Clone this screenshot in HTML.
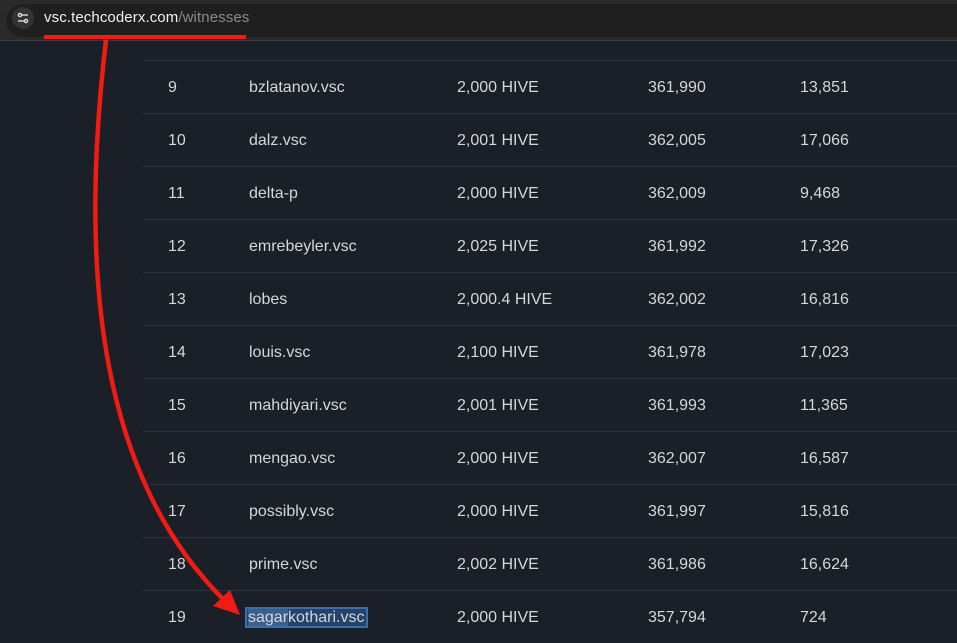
<!DOCTYPE html>
<html><head><meta charset="utf-8"><style>
*{margin:0;padding:0;box-sizing:border-box}
body{width:957px;height:638px;overflow:hidden;background:#1b1f27;font-family:"Liberation Sans",sans-serif;position:relative}
.bar{position:absolute;left:0;top:0;width:957px;height:41px;background:#2a2a2b;border-bottom:1px solid #3a3a3a}
.pill{position:absolute;left:6px;top:4px;width:951px;height:33px;background:#1f1f20;border-radius:17px 0 0 17px}
.ic{position:absolute;left:12px;top:7px;width:22px;height:22px;border-radius:50%;background:#333}
.url{position:absolute;left:44px;top:9px;font-size:15px;color:#f0f0f0;letter-spacing:0.1px}
.url span{color:#8a8a8a}
.row{position:absolute;left:143px;width:814px;height:53px;border-top:1px solid #2d333d;color:#d4d7dc;font-size:16px}
.row div{position:absolute;top:18px}
.c1{left:25px}.c2{left:106px}.c3{left:314px}.c4{left:505px}.c5{left:657px}
.sel{background:#25436a;outline:2px solid #3c6ea8;padding:0 1px;margin-left:-2px}
.sel b{font-weight:normal;background:#3a5f8c}
</style></head><body>
<div class="row" style="top:7px;border-top:none"></div>
<div class="row" style="top:60px"><div class="c1">9</div><div class="c2">bzlatanov.vsc</div><div class="c3">2,000 HIVE</div><div class="c4">361,990</div><div class="c5">13,851</div></div>
<div class="row" style="top:113px"><div class="c1">10</div><div class="c2">dalz.vsc</div><div class="c3">2,001 HIVE</div><div class="c4">362,005</div><div class="c5">17,066</div></div>
<div class="row" style="top:166px"><div class="c1">11</div><div class="c2">delta-p</div><div class="c3">2,000 HIVE</div><div class="c4">362,009</div><div class="c5">9,468</div></div>
<div class="row" style="top:219px"><div class="c1">12</div><div class="c2">emrebeyler.vsc</div><div class="c3">2,025 HIVE</div><div class="c4">361,992</div><div class="c5">17,326</div></div>
<div class="row" style="top:272px"><div class="c1">13</div><div class="c2">lobes</div><div class="c3">2,000.4 HIVE</div><div class="c4">362,002</div><div class="c5">16,816</div></div>
<div class="row" style="top:325px"><div class="c1">14</div><div class="c2">louis.vsc</div><div class="c3">2,100 HIVE</div><div class="c4">361,978</div><div class="c5">17,023</div></div>
<div class="row" style="top:378px"><div class="c1">15</div><div class="c2">mahdiyari.vsc</div><div class="c3">2,001 HIVE</div><div class="c4">361,993</div><div class="c5">11,365</div></div>
<div class="row" style="top:431px"><div class="c1">16</div><div class="c2">mengao.vsc</div><div class="c3">2,000 HIVE</div><div class="c4">362,007</div><div class="c5">16,587</div></div>
<div class="row" style="top:484px"><div class="c1">17</div><div class="c2">possibly.vsc</div><div class="c3">2,000 HIVE</div><div class="c4">361,997</div><div class="c5">15,816</div></div>
<div class="row" style="top:537px"><div class="c1">18</div><div class="c2">prime.vsc</div><div class="c3">2,002 HIVE</div><div class="c4">361,986</div><div class="c5">16,624</div></div>
<div class="row" style="top:590px"><div class="c1">19</div><div class="c2"><span class="sel"><b>sagar</b>kothari.vsc</span></div><div class="c3">2,000 HIVE</div><div class="c4">357,794</div><div class="c5">724</div></div>
<div class="bar"><div class="pill"></div><div class="ic"><svg width="22" height="22" viewBox="0 0 22 22" fill="none" stroke="#ddd" stroke-width="1.4"><line x1="6" y1="8" x2="16" y2="8"/><circle cx="8" cy="8" r="1.6" fill="#333"/><line x1="6" y1="14" x2="16" y2="14"/><circle cx="14" cy="14" r="1.6" fill="#333"/></svg></div>
<div class="url">vsc.techcoderx.com<span>/witnesses</span></div></div>
<svg style="position:absolute;left:0;top:0" width="957" height="638">
<line x1="44" y1="37" x2="246" y2="37" stroke="#f01c14" stroke-width="4"/>
<path d="M106,40 C80,260 95,470 222,598" stroke="#f01c14" stroke-width="4.5" fill="none"/>
<polygon points="240,615 213,606 230,590" fill="#f01c14"/>
</svg>
</body></html>
